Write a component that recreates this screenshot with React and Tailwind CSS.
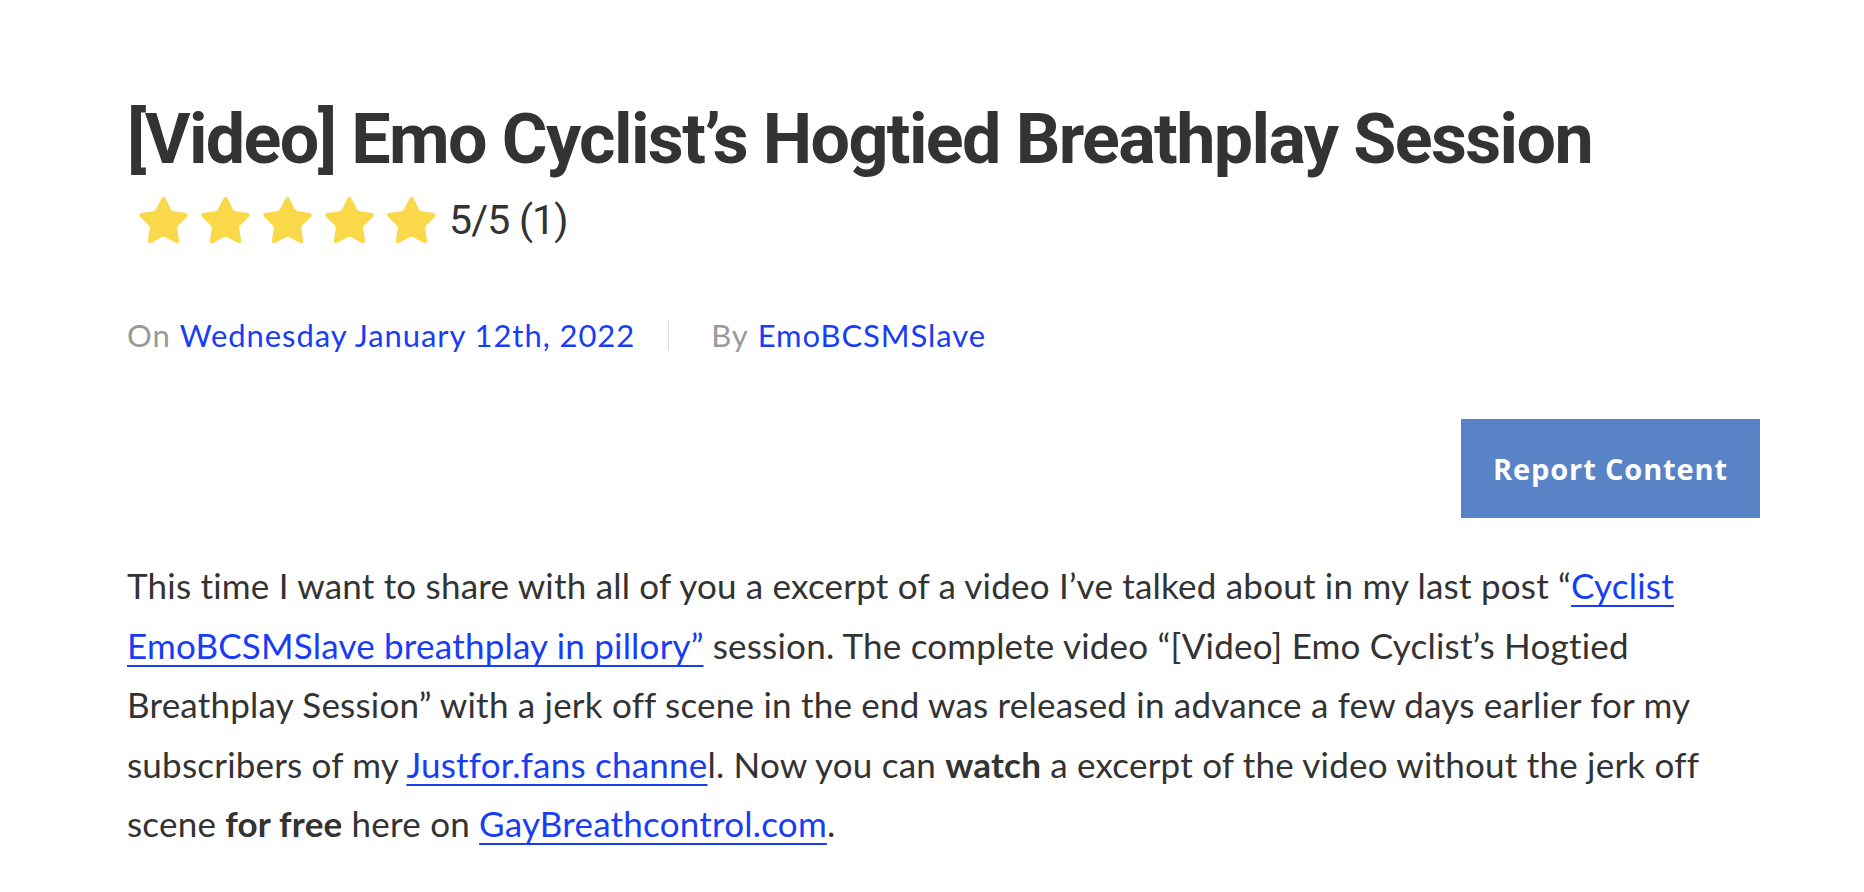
const STAR_PATH =
  'M11.525 2.295a.53.53 0 0 1 .95 0l2.31 4.679a2.123 2.123 0 0 0 1.595 1.16l5.166.756a.53.53 0 0 1 .294.904l-3.736 3.638a2.123 2.123 0 0 0-.611 1.878l.882 5.14a.53.53 0 0 1-.771.56l-4.618-2.428a2.122 2.122 0 0 0-1.973 0L6.396 21.01a.53.53 0 0 1-.77-.56l.881-5.139a2.122 2.122 0 0 0-.611-1.879L2.16 9.795a.53.53 0 0 1 .294-.906l5.165-.755a2.122 2.122 0 0 0 1.597-1.16z'

function Star() {
  return (
    <svg viewBox="1.6 1.6 20.8 20.2" className="w-[49px] h-[47px] shrink-0">
      <path d={STAR_PATH} fill="#f9d84a" stroke="#f9d84a" strokeWidth="0.8" strokeLinejoin="round" />
    </svg>
  )
}

export default function App() {
  return (
    <div className="min-h-screen bg-white text-[#333] font-['Lato','Open_Sans',sans-serif]">
      <article className="pl-[127px] pr-[104px] pt-[99px]">
        {/* Title */}
        <h1 className="font-['Roboto','Noto_Sans',sans-serif] text-[70px] leading-[80px] font-bold tracking-[-0.023em] whitespace-nowrap">
          [Video] Emo Cyclist’s Hogtied Breathplay Session
        </h1>

        {/* Rating */}
        <div className="mt-[18px] ml-[12px] flex items-center gap-[13px]">
          {[0, 1, 2, 3, 4].map((i) => (
            <Star key={i} />
          ))}
          <span className="font-['Roboto','Noto_Sans',sans-serif] text-[41px] leading-[47px] tracking-[-0.02em]">
            5/5 (1)
          </span>
        </div>

        {/* Meta */}
        <div className="mt-[71px] flex items-center text-[31px] leading-[40px] tracking-[0.03em]">
          <span className="text-[#999]">On</span>
          <a href="#" className="ml-[9px] text-[#193cf5]">Wednesday January 12th, 2022</a>
          <span className="ml-[33px] mr-[42px] w-px h-[29px] bg-[#ddd]" />
          <span className="text-[#999]">By</span>
          <a href="#" className="ml-[9px] text-[#193cf5]">EmoBCSMSlave</a>
        </div>

        {/* Report button */}
        <div className="mt-[64px] flex justify-end">
          <button className="w-[299px] h-[99px] bg-[#5884c7] text-white text-[29px] tracking-[0.03em] font-bold font-['Open_Sans',sans-serif]">
            Report Content
          </button>
        </div>

        {/* Body */}
        <p className="mt-[38px] text-[35px] leading-[59.5px] tracking-[0.006em]">
          This time I want to share with all of you a excerpt of a video I’ve talked about in my last post “
          <a href="#" className="text-[#193cf5] underline decoration-2 underline-offset-[6px]">
            Cyclist EmoBCSMSlave breathplay in pillory”
          </a>{' '}
          session. The complete video “[Video] Emo Cyclist’s Hogtied Breathplay Session” with a jerk off scene in the end was
          released in advance a few days earlier for my subscribers of my{' '}
          <a href="#" className="text-[#193cf5] underline decoration-2 underline-offset-[6px]">
            Justfor.fans channe
          </a>
          l. Now you can <strong className="font-bold">watch</strong> a excerpt of the video without the jerk off scene{' '}
          <strong className="font-bold">for free</strong> here on{' '}
          <a href="#" className="text-[#193cf5] underline decoration-2 underline-offset-[6px]">
            GayBreathcontrol.com
          </a>
          .
        </p>
      </article>
    </div>
  )
}
